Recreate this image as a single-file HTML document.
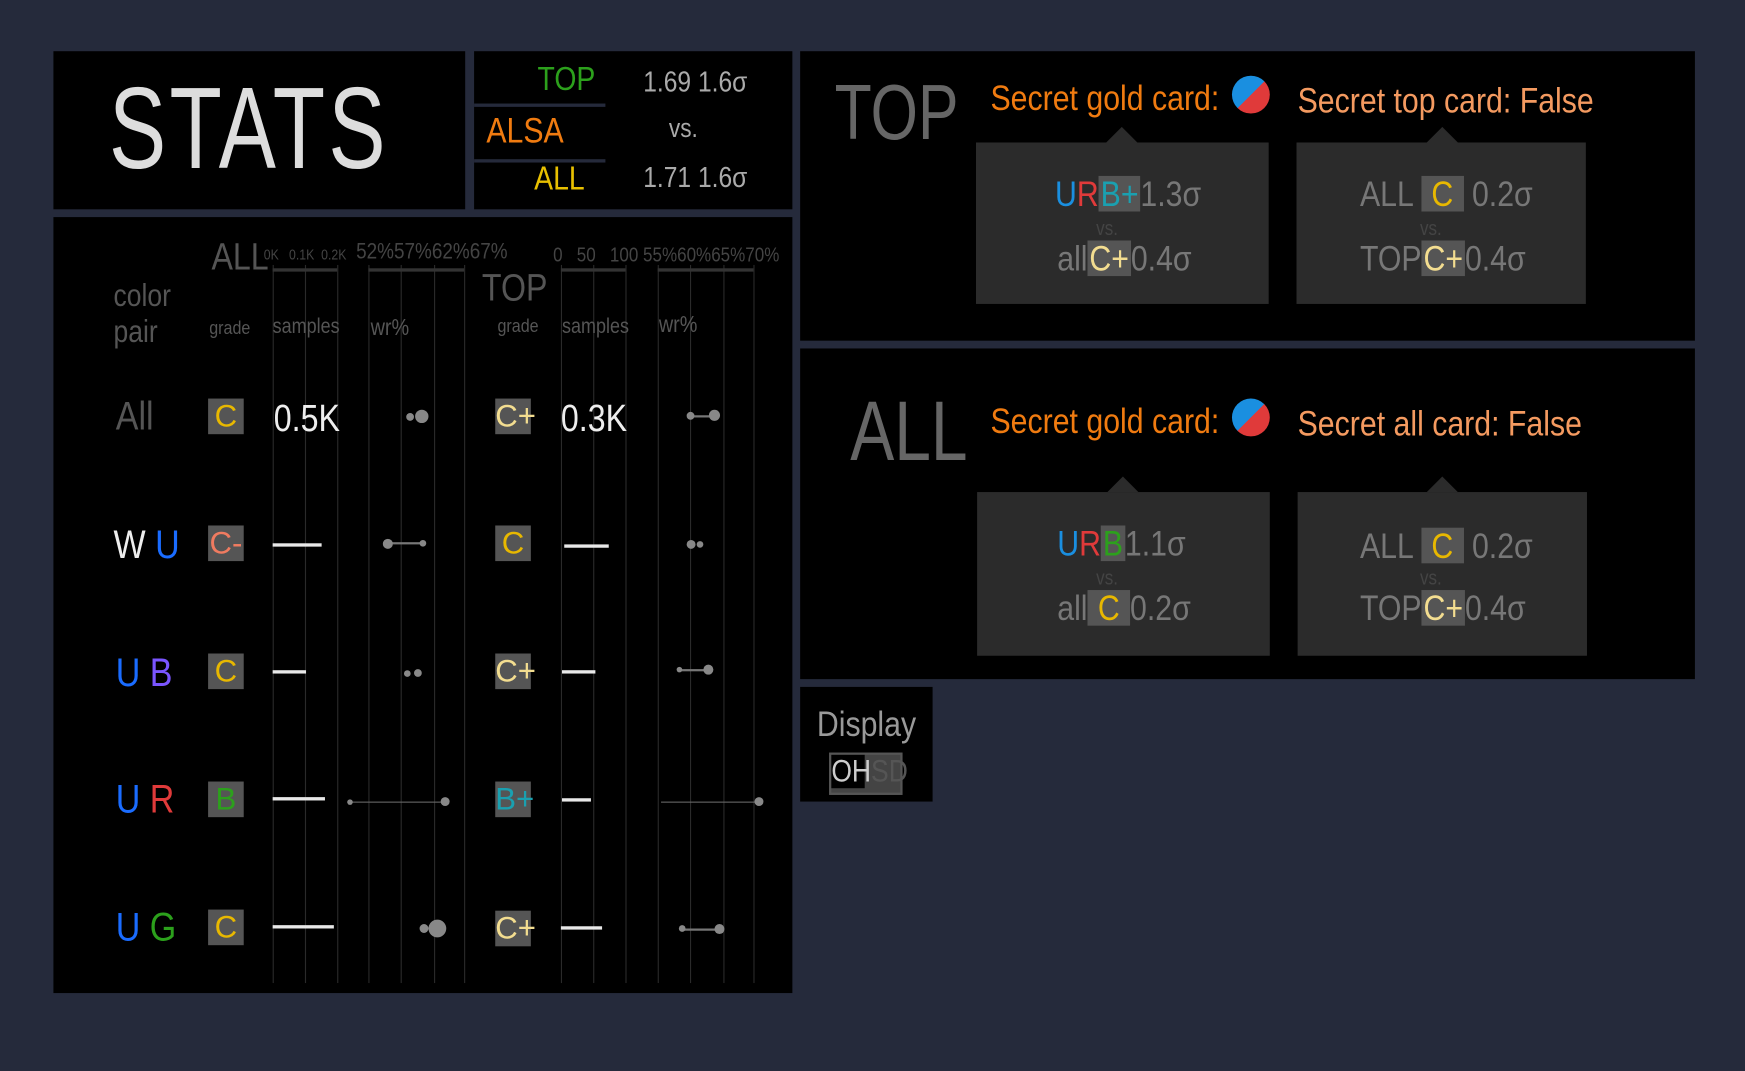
<!DOCTYPE html>
<html><head><meta charset="utf-8"><style>
html,body{margin:0;padding:0;background:#252a3b;overflow:hidden;width:1745px;height:1071px}
#w{position:absolute;left:0;top:0;width:1568px;height:962px;transform:scale(1.11288,1.1133);transform-origin:0 0;font-family:"Liberation Sans Narrow","Liberation Sans",sans-serif}
.p{position:absolute;background:#000}
.t{position:absolute;white-space:nowrap;line-height:1;transform:scaleX(.85);transform-origin:0 0}
.g{position:absolute;background:#555;width:32px;height:32px;text-align:center;font-size:28px;line-height:32px}
.vl{position:absolute;width:1px;background:#2a2a2a}
.h{position:absolute;height:3px;background:#e8e8e8}
.dot{position:absolute;border-radius:50%;background:#888}
.box{position:absolute;background:#2b2b2b}
.tri{position:absolute;width:0;height:0;border-left:14px solid transparent;border-right:14px solid transparent;border-bottom:14px solid #2b2b2b}
.s{display:inline-block;background:#555;padding:0 2px}
</style></head><body><div id="w">
<div class="p" style="left:48px;top:46px;width:370px;height:142px"></div>
<div class="t" style="left:98px;top:64px;font-size:104px;color:#ddd;letter-spacing:4px;transform:scaleX(.74)">STATS</div>
<div class="p" style="left:426px;top:46px;width:286px;height:142px"></div>
<div style="position:absolute;left:426px;top:93px;width:118px;height:3px;background:#252a3b"></div>
<div style="position:absolute;left:426px;top:143px;width:118px;height:3px;background:#252a3b"></div>
<div class="t" style="left:483px;top:57px;font-size:30px;color:#2ca01c">TOP</div>
<div class="t" style="left:437px;top:101px;font-size:32px;color:#f07b10">ALSA</div>
<div class="t" style="left:480px;top:146px;font-size:30px;color:#e8c000">ALL</div>
<div class="t" style="left:578px;top:60px;font-size:26px;color:#aaa">1.69 1.6σ</div>
<div class="t" style="left:601px;top:104px;font-size:24px;color:#aaa">vs.</div>
<div class="t" style="left:578px;top:146px;font-size:26px;color:#aaa">1.71 1.6σ</div>

<div class="p" style="left:48px;top:195px;width:664px;height:697px"></div>
<div class="vl" style="left:245px;top:238px;height:645px"></div>
<div class="vl" style="left:274px;top:238px;height:645px"></div>
<div class="vl" style="left:303px;top:238px;height:645px"></div>
<div class="vl" style="left:331px;top:238px;height:645px"></div>
<div class="vl" style="left:360px;top:238px;height:645px"></div>
<div class="vl" style="left:390px;top:238px;height:645px"></div>
<div class="vl" style="left:417px;top:238px;height:645px"></div>
<div class="vl" style="left:504px;top:238px;height:645px"></div>
<div class="vl" style="left:533px;top:238px;height:645px"></div>
<div class="vl" style="left:562px;top:238px;height:645px"></div>
<div class="vl" style="left:591px;top:238px;height:645px"></div>
<div class="vl" style="left:620px;top:238px;height:645px"></div>
<div class="vl" style="left:650px;top:238px;height:645px"></div>
<div class="vl" style="left:677px;top:238px;height:645px"></div>
<div style="position:absolute;left:245px;top:241px;width:58px;height:3px;background:#333"></div>
<div style="position:absolute;left:331px;top:241px;width:86px;height:3px;background:#333"></div>
<div style="position:absolute;left:504px;top:241px;width:58px;height:3px;background:#333"></div>
<div style="position:absolute;left:591px;top:241px;width:86px;height:3px;background:#333"></div>
<div class="t" style="left:190px;top:214px;font-size:34px;color:#555">ALL</div>
<div class="t" style="left:237px;top:222px;font-size:13px;color:#444">0K &nbsp;&nbsp;0.1K &nbsp;0.2K</div>
<div class="t" style="left:320px;top:216px;font-size:20px;color:#444">52%57%62%67%</div>
<div class="t" style="left:433px;top:242px;font-size:34px;color:#555">TOP</div>
<div class="t" style="left:497px;top:220px;font-size:18px;color:#444">0 &nbsp;&nbsp;50 &nbsp;&nbsp;100 55%60%65%70%</div>
<div class="t" style="left:102px;top:250px;font-size:28px;color:#555;line-height:32px">color<br>pair</div>
<div class="t" style="left:188px;top:286px;font-size:17px;color:#555">grade</div>
<div class="t" style="left:245px;top:284px;font-size:19px;color:#555">samples</div>
<div class="t" style="left:333px;top:284px;font-size:21px;color:#555">wr%</div>
<div class="t" style="left:447px;top:284px;font-size:17px;color:#555">grade</div>
<div class="t" style="left:505px;top:284px;font-size:19px;color:#555">samples</div>
<div class="t" style="left:592px;top:281px;font-size:21px;color:#555">wr%</div>

<div class="t" style="left:104px;top:356px;font-size:36px;color:#555">All</div>
<div class="g" style="left:187px;top:358px;color:#e8b800">C</div>
<div class="t" style="left:246px;top:359px;font-size:34px;color:#eee">0.5K</div>
<div class="dot" style="left:365px;top:371px;width:7px;height:7px"></div><div class="dot" style="left:373px;top:368px;width:12px;height:12px"></div>
<div class="g" style="left:445px;top:358px;color:#f3dd90">C+</div>
<div class="t" style="left:504px;top:359px;font-size:34px;color:#eee">0.3K</div>
<div style="position:absolute;left:620px;top:373px;width:22px;height:2px;background:#777"></div><div class="dot" style="left:617px;top:370px;width:7px;height:7px"></div><div class="dot" style="left:637px;top:368px;width:10px;height:10px"></div>

<div class="t" style="left:102px;top:471px;font-size:36px;color:#eee">W <span style="color:#1a6cff">U</span></div>
<div class="g" style="left:187px;top:472px;color:#f07b60">C-</div>
<div class="h" style="left:245px;top:488px;width:44px"></div>
<div style="position:absolute;left:348px;top:487px;width:32px;height:2px;background:#777"></div><div class="dot" style="left:344px;top:484px;width:9px;height:9px"></div><div class="dot" style="left:377px;top:485px;width:6px;height:6px"></div>
<div class="g" style="left:445px;top:472px;color:#e8b800">C</div>
<div class="h" style="left:507px;top:489px;width:40px"></div>
<div class="dot" style="left:617px;top:485px;width:8px;height:8px"></div><div class="dot" style="left:626px;top:486px;width:6px;height:6px"></div>

<div class="t" style="left:104px;top:586px;font-size:36px;color:#1a6cff">U <span style="color:#7a55ff">B</span></div>
<div class="g" style="left:187px;top:587px;color:#e8b800">C</div>
<div class="h" style="left:245px;top:602px;width:30px"></div>
<div class="dot" style="left:363px;top:602px;width:6px;height:6px"></div><div class="dot" style="left:372px;top:601px;width:7px;height:7px"></div>
<div class="g" style="left:445px;top:587px;color:#f3dd90">C+</div>
<div class="h" style="left:505px;top:602px;width:30px"></div>
<div style="position:absolute;left:610px;top:601px;width:26px;height:2px;background:#777"></div><div class="dot" style="left:608px;top:599px;width:5px;height:5px"></div><div class="dot" style="left:632px;top:597px;width:9px;height:9px"></div>

<div class="t" style="left:104px;top:700px;font-size:36px;color:#1a6cff">U <span style="color:#e03a3a">R</span></div>
<div class="g" style="left:187px;top:702px;color:#2ca01c">B</div>
<div class="h" style="left:245px;top:716px;width:47px"></div>
<div style="position:absolute;left:314px;top:720px;width:86px;height:1px;background:#666"></div><div class="dot" style="left:312px;top:718px;width:5px;height:5px"></div><div class="dot" style="left:396px;top:716px;width:8px;height:8px"></div>
<div class="g" style="left:445px;top:702px;color:#1aa0b0">B+</div>
<div class="h" style="left:505px;top:717px;width:26px"></div>
<div style="position:absolute;left:594px;top:720px;width:88px;height:1px;background:#666"></div><div class="dot" style="left:678px;top:716px;width:8px;height:8px"></div>

<div class="t" style="left:104px;top:815px;font-size:36px;color:#1a6cff">U <span style="color:#2ca01c">G</span></div>
<div class="g" style="left:187px;top:817px;color:#e8b800">C</div>
<div class="h" style="left:245px;top:831px;width:55px"></div>
<div class="dot" style="left:377px;top:830px;width:8px;height:8px"></div><div class="dot" style="left:385px;top:826px;width:16px;height:16px"></div>
<div class="g" style="left:445px;top:818px;color:#f3dd90">C+</div>
<div class="h" style="left:504px;top:832px;width:37px"></div>
<div style="position:absolute;left:613px;top:834px;width:34px;height:2px;background:#777"></div><div class="dot" style="left:610px;top:831px;width:6px;height:6px"></div><div class="dot" style="left:642px;top:830px;width:9px;height:9px"></div>

<div class="p" style="left:719px;top:46px;width:804px;height:260px"></div>
<div class="t" style="left:750px;top:66px;font-size:70px;color:#666;transform:scaleX(.78)">TOP</div>
<div class="t" style="left:890px;top:72px;font-size:32px;color:#f07b10">Secret gold card:</div>
<div style="position:absolute;left:1107px;top:68px;width:34px;height:34px;border-radius:50%;background:linear-gradient(135deg,#1a8fe0 50%,#e03a3a 50%)"></div>
<div class="t" style="left:1166px;top:74px;font-size:32px;color:#f49a60">Secret top card: False</div>
<div class="tri" style="left:994px;top:114px"></div>
<div class="box" style="left:877px;top:128px;width:263px;height:145px"></div>
<div class="tri" style="left:1282px;top:114px"></div>
<div class="box" style="left:1165px;top:128px;width:260px;height:145px"></div>
<div class="t" style="left:948px;top:158px;font-size:32px;color:#777"><span style="color:#1a8fe0">U</span><span style="color:#e03a3a">R</span><span class="s" style="color:#1aa0b0">B+</span>1.3σ</div>
<div class="t" style="left:985px;top:196px;font-size:18px;color:#444">vs.</div>
<div class="t" style="left:950px;top:216px;font-size:32px;color:#777">all<span class="s" style="color:#f3dd90">C+</span>0.4σ</div>
<div class="t" style="left:1222px;top:158px;font-size:32px;color:#777">ALL <span class="s" style="color:#e8b800">&nbsp;C&nbsp;</span> 0.2σ</div>
<div class="t" style="left:1276px;top:196px;font-size:18px;color:#444">vs.</div>
<div class="t" style="left:1222px;top:216px;font-size:32px;color:#777">TOP<span class="s" style="color:#f3dd90">C+</span>0.4σ</div>

<div class="p" style="left:719px;top:313px;width:804px;height:297px"></div>
<div class="t" style="left:764px;top:350px;font-size:76px;color:#666;transform:scaleX(.78)">ALL</div>
<div class="t" style="left:890px;top:362px;font-size:32px;color:#f07b10">Secret gold card:</div>
<div style="position:absolute;left:1107px;top:358px;width:34px;height:34px;border-radius:50%;background:linear-gradient(135deg,#1a8fe0 50%,#e03a3a 50%)"></div>
<div class="t" style="left:1166px;top:364px;font-size:32px;color:#f49a60">Secret all card: False</div>
<div class="tri" style="left:995px;top:428px"></div>
<div class="box" style="left:878px;top:442px;width:263px;height:147px"></div>
<div class="tri" style="left:1282px;top:428px"></div>
<div class="box" style="left:1166px;top:442px;width:260px;height:147px"></div>
<div class="t" style="left:950px;top:472px;font-size:32px;color:#777"><span style="color:#1a8fe0">U</span><span style="color:#e03a3a">R</span><span class="s" style="color:#2ca01c">B</span>1.1σ</div>
<div class="t" style="left:985px;top:510px;font-size:18px;color:#444">vs.</div>
<div class="t" style="left:950px;top:530px;font-size:32px;color:#777">all<span class="s" style="color:#e8b800">&nbsp;C&nbsp;</span>0.2σ</div>
<div class="t" style="left:1222px;top:474px;font-size:32px;color:#777">ALL <span class="s" style="color:#e8b800">&nbsp;C&nbsp;</span> 0.2σ</div>
<div class="t" style="left:1276px;top:510px;font-size:18px;color:#444">vs.</div>
<div class="t" style="left:1222px;top:530px;font-size:32px;color:#777">TOP<span class="s" style="color:#f3dd90">C+</span>0.4σ</div>

<div class="p" style="left:719px;top:617px;width:119px;height:103px"></div>
<div class="t" style="left:734px;top:634px;font-size:32px;color:#999">Display</div>
<div style="position:absolute;left:745px;top:676px;width:62px;height:34px;border:2px solid #555;background:#444"></div>
<div style="position:absolute;left:747px;top:678px;width:30px;height:30px;background:#000"></div>
<div class="t" style="left:747px;top:679px;font-size:28px;color:#ccc">OH<span style="color:#555">SD</span></div>
</div></body></html>
